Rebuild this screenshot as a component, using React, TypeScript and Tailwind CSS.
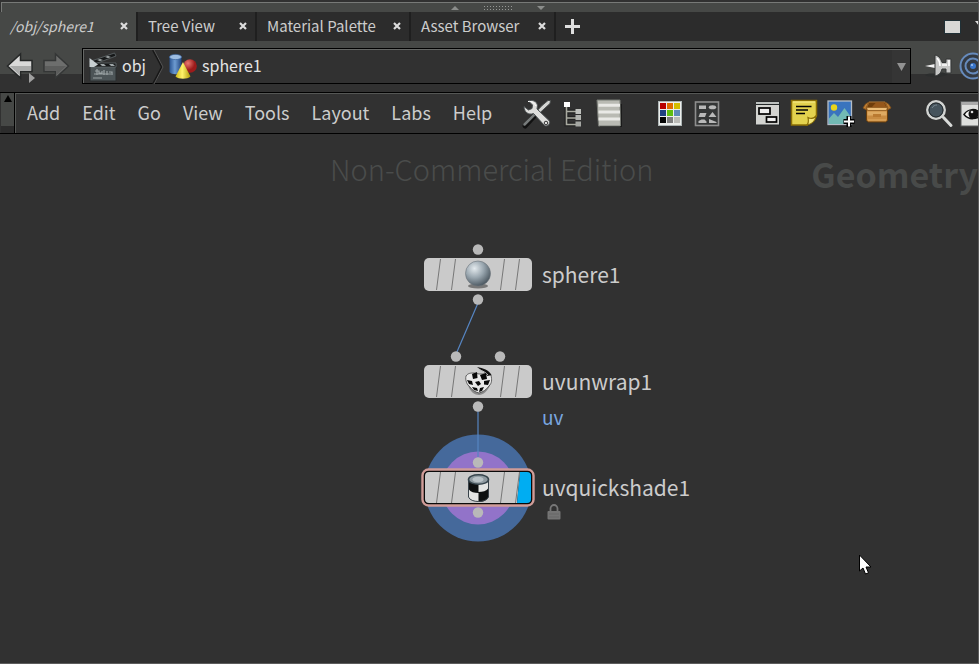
import type { ReactNode } from "react";

const tabs = [
  { name: "/obj/sphere1", width: "w-[138px]", text: "text-[14px] italic", background: "bg-[#464846]" },
  { name: "Tree View", width: "w-[119px]", text: "text-[15px]", background: "" },
  { name: "Material Palette", width: "w-[154px]", text: "text-[15px]", background: "" },
  { name: "Asset Browser", width: "w-[145px]", text: "text-[15px]", background: "" },
];

const menus = ["Add", "Edit", "Go", "View", "Tools", "Layout", "Labs", "Help"];

function Svg({ children, className = "size-7" }: { children: ReactNode; className?: string }) {
  return (
    <svg viewBox="0 0 28 28" className={`${className} shrink-0 overflow-visible`} aria-hidden="true">
      {children}
    </svg>
  );
}

function ToolsIcon() {
  return (
    <Svg>
      <path d="M2 27 14 14" stroke="#111" strokeWidth="5" strokeLinecap="round" />
      <path d="M1.500 25.500 15 12" stroke="#777b7b" strokeWidth="2.500" strokeLinecap="round" />
      <path d="M12 14 19 6.500 25 1.500 27.500 1.500 27 4.500 21 10 14.500 16Z" fill="#d4d5d3" stroke="#4a4d4d" strokeWidth="1" />
      <path d="M1 7.500 5.500 11 9 9.500 9.500 6 5.500 2C9 .5 14 2 14.500 6.500L14 10 26 21.500C28 24 25 28.500 21.500 26.500L10.500 14.500C5.500 16.500 1 13 1 7.500Z" fill="#dededc" stroke="#4b5052" strokeWidth="1" />
      <path d="M5 2.500C8.500 2 12 4 12.500 7" fill="none" stroke="#fff" strokeWidth="1" />
      <circle cx="23" cy="24" r="1.800" fill="#ddd" stroke="#333" strokeWidth="1" />
    </Svg>
  );
}

function TreeIcon() {
  return (
    <Svg>
      <path d="M7.500 8v17.500H17M7.500 12.500H17M7.500 19H17" fill="none" stroke="#222" strokeWidth="4" />
      <path d="M7.500 8v17.500H17M7.500 12.500H17M7.500 19H17" fill="none" stroke="#a9aaa0" strokeWidth="1.600" />
      <rect x="5" y="3" width="6" height="5" fill="#fff" />
      <rect x="16.500" y="10" width="5.500" height="5" fill="#bfc1bd" />
      <rect x="16.500" y="16" width="5.500" height="5" fill="#b2b4b0" />
      <rect x="16.500" y="22.500" width="5.500" height="5" fill="#a5a7a3" />
    </Svg>
  );
}

function ListIcon() {
  return (
    <Svg>
      <path d="M5 5h21.500v23H5Z" fill="#050505" />
      <path d="M2 1h23l.5 26H3.500Z" fill="#b9bab3" stroke="#777a74" strokeWidth="1" />
      <path d="M3.500 6.200h21.500M3.500 13h21.500M3.500 20h21.500" stroke="#e9e9e6" strokeWidth="3" />
    </Svg>
  );
}

const swatches = ["#b80000", "#e06c00", "#d4bd00", "#1f4080", "#5fbe10", "#5f8ab8", "#050505", "#7d7d7d", "#bcbcb8"];

function PaletteIcon() {
  return (
    <Svg>
      <rect x="2.500" y="2.500" width="23" height="24" fill="#eceeec" stroke="#aeb6b6" />
      {swatches.map((fill, i) => (
        <rect key={fill} x={4 + (i % 3) * 7} y={4 + Math.floor(i / 3) * 7} width="6" height="6" fill={fill} />
      ))}
    </Svg>
  );
}

function ShapesIcon() {
  return (
    <Svg>
      <rect x="3.500" y="3" width="23" height="23.500" fill="#343636" stroke="#8e8e8e" strokeWidth="1.600" />
      <g fill="#b9b9b9">
        <path d="M7 6.500h7v3.500H7ZM8 14h6.500l-1.500 4H6.500ZM6.500 24v-2l3-1.500h3l2 2V24ZM16.500 18l4-5 4 5ZM17 24v-4l7.500 3v1Z" />
        <ellipse cx="20.500" cy="8.300" rx="3.700" ry="2" />
      </g>
    </Svg>
  );
}

function NetworkBoxIcon() {
  return (
    <Svg>
      <rect x="3" y="2.500" width="24" height="24" fill="#222728" />
      <rect x="3" y="3" width="23" height="2" fill="#bcc0be" />
      <rect x="3" y="6" width="23" height="19.500" fill="#d3d4d1" />
      <rect x="6" y="9" width="11" height="6" fill="#eee" stroke="#000" strokeWidth="1.700" />
      <rect x="13.500" y="18" width="10" height="5" fill="#eee" stroke="#000" strokeWidth="1.700" />
    </Svg>
  );
}

function NoteIcon() {
  return (
    <Svg>
      <path d="M2.500 1.500h25v15l-9 9.500H2.500Z" fill="#e3d24e" stroke="#8a6e05" strokeWidth="1.500" />
      <path d="M4 3h22" stroke="#f5ea87" strokeWidth="1.200" />
      <path d="M18 26c2-2 1.500-5 1-7.500 3 1.500 6.500 1 8.500-2-1 5-4.500 8.500-9.500 9.500Z" fill="#f4e77c" stroke="#8a6e05" strokeWidth="1.200" />
      <path d="M7 7.500h15.500M7 11h12M7 14.500h9" stroke="#050505" strokeWidth="1.500" />
    </Svg>
  );
}

function ImageIcon() {
  return (
    <Svg>
      <rect x="3" y="2" width="23.500" height="23.500" fill="#3974be" stroke="#b4bdc7" strokeWidth="1.300" />
      <circle cx="9" cy="8.500" r="3.200" fill="#ead51b" />
      <path d="M4 19.500 9 14l4 4 6.500-9 6.500 9v7H4Z" fill="#72b9b4" />
      <path d="M24 19.500v6M21 22.500h6" stroke="#000" strokeWidth="5" strokeLinecap="square" />
      <path d="M24 17.500v10M19 22.500h10" stroke="#fff" strokeWidth="2" />
    </Svg>
  );
}

function BoxIcon() {
  return (
    <Svg>
      <path d="M5.500 9.500h21v12l-2 1.500h-17l-2-1.500Z" fill="#c98c42" stroke="#6b3e0a" strokeWidth="1" />
      <path d="M8 3h16l2.500 5.500h-21Z" fill="#6f3d0a" stroke="#b27b38" strokeWidth="1" />
      <path d="m11 8 4-4.500h8l2.500 5Z" fill="#96571a" />
      <path d="m5 9 3-6-3.500 2L2 9l3.500 2ZM27 9l-3-6 3.500 2L30 9l-3.500 2Z" fill="#c07e33" stroke="#80501a" strokeWidth=".8" />
      <path d="M5.500 8.500h21l-1 3h-19Z" fill="#ecbd78" stroke="#8b571c" strokeWidth=".8" />
      <path d="M6.500 12.500h19v4h-19Z" fill="#deaa62" />
      <path d="M12 15h8v3h-8Z" fill="#ba7a31" />
      <path d="M7 21h18" stroke="#e0aa60" strokeWidth="1.200" />
    </Svg>
  );
}

function MagnifierIcon() {
  return (
    <Svg>
      <path d="m19.500 18.500 7.500 8" stroke="#d8dad8" strokeWidth="3" strokeLinecap="round" />
      <circle cx="12" cy="11" r="8.700" fill="#36424a" stroke="#d2d4d2" strokeWidth="2.500" />
      <circle cx="12" cy="11" r="7" fill="#46545d" stroke="#252b2e" strokeWidth="1" />
      <path d="M8 9c1-2 3-3 5-3" fill="none" stroke="#788790" strokeWidth="1" />
    </Svg>
  );
}

function EyeIcon() {
  return (
    <Svg>
      <rect x="1" y="2.500" width="26" height="24.500" fill="#dedfdd" stroke="#5a5d5d" />
      <rect x="2" y="3" width="24" height="3" fill="#aaa" />
      <path d="M4 15.500c4-6 12-7 18 0-5 5-13 6-18 0Z" fill="#f4f4f2" stroke="#111" strokeWidth="1.500" />
      <circle cx="13.500" cy="15" r="5" fill="#111" />
      <circle cx="12" cy="13" r="1.300" fill="#ddd" />
    </Svg>
  );
}

const toolGroups = [
  { space: "ml-4", items: [["Operator tools", <ToolsIcon />], ["Tree", <TreeIcon />], ["List", <ListIcon />]] },
  { space: "ml-[25px]", items: [["Color palette", <PaletteIcon />], ["Shape palette", <ShapesIcon />]] },
  { space: "ml-[25px]", items: [["Network box", <NetworkBoxIcon />], ["Sticky note", <NoteIcon />], ["Background image", <ImageIcon />], ["Subnet", <BoxIcon />]] },
  { space: "ml-[27px]", items: [["Find", <MagnifierIcon />], ["Display options", <EyeIcon />]] },
] as { space: string; items: [string, ReactNode][] }[];

function ArrowIcon({ forward = false }: { forward?: boolean }) {
  return (
    <svg viewBox="0 0 28 28" className={`size-7 shrink-0 ${forward ? "-scale-x-100" : ""}`} aria-hidden="true">
      <path d="M1.500 14 14.500 2v6.500H26v11H14.500V26Z" fill={forward ? "#6d6e6d" : "#d9d9d8"} stroke={forward ? "#343636" : "#252727"} strokeWidth="1.500" />
      <path d="M4 14h21v4.500H13.500v4.500Z" fill={forward ? "#5c5d5c" : "#aaabaa"} />
    </svg>
  );
}

function ClapperIcon() {
  return (
    <Svg className="size-7">
      <path d="M1 13h26v15H1Z" fill="#4c5457" stroke="#2b2f30" />
      <path d="M1 8.500 25.500 0l1.500 3L3 12Z" fill="#161819" stroke="#697174" strokeWidth=".7" />
      <path d="m8 7 3-1 3 1-3 1ZM16 4l3-1 3 1-3 1Z" fill="#aab0b1" />
      <path d="M2 10h25v4H2Z" fill="#17191a" stroke="#697174" strokeWidth=".7" />
      <path d="M11 11h4l2 2h-4ZM20 11h4l2 2h-4Z" fill="#9fa6a8" />
      <path d="M.5 5 9 11.500 5 14H.5Z" fill="#c7cfd2" />
      <path d="M6 18h4v2h3v-2M8 16v6M15 17v5M18 18v4M20 19h3v3M5 21h17M4 25h9" fill="none" stroke="#9aa2a4" strokeWidth="1.200" />
    </Svg>
  );
}

function GeometryIcon() {
  return (
    <Svg className="size-7">
      <defs>
        <linearGradient id="cylinder">
          <stop stopColor="#2a5593" />
          <stop offset=".45" stopColor="#6d9bd1" />
          <stop offset="1" stopColor="#21457e" />
        </linearGradient>
        <linearGradient id="cone">
          <stop stopColor="#d0b915" />
          <stop offset=".45" stopColor="#fff26b" />
          <stop offset="1" stopColor="#b09a08" />
        </linearGradient>
        <radialGradient id="ball" cx=".35" cy=".3">
          <stop stopColor="#e87870" />
          <stop offset="1" stopColor="#9d1b1b" />
        </radialGradient>
      </defs>
      <path d="M.5 4v15c2 3 10 3 12 0V4Z" fill="url(#cylinder)" />
      <ellipse cx="6.500" cy="4" rx="6" ry="2.600" fill="#9dbde2" stroke="#3c659d" strokeWidth=".7" />
      <circle cx="21" cy="13" r="6.800" fill="url(#ball)" />
      <path d="M14 9 6.500 23.500c3 3 12 3 15 0Z" fill="url(#cone)" />
    </Svg>
  );
}

function PinIcon() {
  return (
    <Svg>
      <path d="M0 23c6-3 10 0 12-2 4-1 8 0 11 1-5 4-18 4-23 1Z" fill="#2c2e2e" />
      <path d="m0 14 10-2v4Z" fill="#f2f2f2" />
      <path d="M10 3c5 1 6 5 7 7.500h4V7h5v14h-5v-4h-4c-1 3-2 6-7 7Z" fill="#c6c7c6" stroke="#343636" strokeWidth="1" />
      <path d="M12 6c2 2 3 5 3 8M24 8v6M17 13h5" fill="none" stroke="#fff" strokeWidth="1.500" />
    </Svg>
  );
}

function TargetIcon() {
  return (
    <Svg>
      <circle cx="14" cy="14" r="12.500" fill="#343a42" stroke="#668bbd" strokeWidth="2" />
      <circle cx="14" cy="14" r="7.500" fill="none" stroke="#668bbd" strokeWidth="2" />
      <circle cx="14" cy="14" r="3" fill="#3975c9" />
      <circle cx="13" cy="13" r="1" fill="#a9c8f2" />
    </Svg>
  );
}

function SphereGlyph() {
  return (
    <g>
      <defs>
        <radialGradient id="sphere" cx=".36" cy=".3" r=".75">
          <stop stopColor="#e4eaee" />
          <stop offset=".5" stopColor="#98a5ae" />
          <stop offset="1" stopColor="#46525b" />
        </radialGradient>
      </defs>
      <ellipse cx="60" cy="50" rx="10" ry="2.500" fill="#777" />
      <circle cx="60" cy="37.500" r="12.500" fill="url(#sphere)" stroke="#6b747b" strokeWidth=".6" />
    </g>
  );
}

function UnwrapGlyph() {
  return (
    <g>
      <path d="M50 42c2 7 7 10 11 10s9-4 11-10Z" fill="#8a8a8a" />
      <path d="M48 33c2-3 5-3 8-3l5 1h7l5 1c1 5 1 8-2 11-3 4-6 6-10 7-4-1-7-3-9-6-3-2-5-7-4-11Z" fill="#e8e8e8" stroke="#444" strokeWidth=".8" />
      <path d="M59 24c6 1 12 3 14.500 8l-4 1c-2-4-6-5-10.500-9Z" fill="#111" />
      <path d="M61 26.500c4 1.500 7 3 9 5.500" fill="none" stroke="#bbb" strokeWidth="1" />
      <path d="m54 31 5-2 .5 6-4.500 1ZM62 32l6-2 1 6-5 1ZM49 37l5 1 1 4-4-1ZM57 39l4-1 2 3-3 2ZM66 38l6-1-2 5-4-.5ZM54 44l5 1 1 3-4-1ZM62 45l4-1-2 4-3 1Z" fill="#080808" />
    </g>
  );
}

function ShadeGlyph() {
  return (
    <g>
      <path d="M50.500 30v18c2 6 18 6 20 0V30Z" fill="#e3e5e4" />
      <path d="M50.500 31v9c2 3 6 4 10 4v-9ZM60.500 43c4 0 8-1 10-4v9c-2 4-6 5-10 5Z" fill="#0d1011" />
      <path d="M50.500 30v18c2 6 18 6 20 0V30Z" fill="none" stroke="#39434a" strokeWidth="1" />
      <ellipse cx="60.500" cy="30.500" rx="10" ry="4.800" fill="#8e9aa1" stroke="#35444c" strokeWidth="1.600" />
      <ellipse cx="60" cy="30.500" rx="5.500" ry="2.700" fill="#b8c2c7" />
    </g>
  );
}

/* Body of a network node: a 108x33 tile with its connectors above and below. */
function NodeBody({ inputs, selected = false, glyph }: { inputs: number[]; selected?: boolean; glyph: ReactNode }) {
  return (
    <svg viewBox="0 0 120 74" className="h-[74px] w-[120px] shrink-0 overflow-visible" aria-hidden="true">
      {selected && (
        <>
          <rect x="4.500" y="18.500" width="111" height="36" rx="6" fill="#0a0a0a" stroke="#d09c98" strokeWidth="2.400" />
          <path d="M11 21h91l-3 31H11q-4 0-4-4V25q0-4 4-4Z" fill="#cacaca" />
          <path d="M102 21h7q4 0 4 4v23q0 4-4 4H99Z" fill="#00adf2" />
        </>
      )}
      {!selected && <rect x="6" y="20" width="108" height="33" rx="5" fill="#cacaca" />}
      <path d="m22.500 21-4 31M37.500 21l-4 31M86.500 21l-4 31M101.500 21l-4 31" stroke="#777" strokeWidth="1" />
      {inputs.map((x) => (
        <circle key={x} cx={x} cy="11.500" r="5.200" fill="#b9b9b9" />
      ))}
      <circle cx="60" cy="61.500" r="5.200" fill="#b9b9b9" />
      <g transform="translate(0 -2)">{glyph}</g>
    </svg>
  );
}

function NetworkNode({ place, name, children, body }: { place: string; name: string; children?: ReactNode; body: ReactNode }) {
  return (
    <div className={`absolute flex gap-1 ${place}`}>
      {body}
      <div className="pt-5">
        <div className="text-[21px] leading-8">{name}</div>
        {children}
      </div>
    </div>
  );
}

export default function App() {
  return (
    <div className="flex h-screen flex-col overflow-hidden border-r border-b border-[#5c5c5c] bg-[#313131] font-['Noto_Sans_CJK_SC','Noto_Sans',sans-serif] text-[#cccccc]">
      <div className="ml-px mt-0.5 flex h-2.5 shrink-0 items-center justify-center gap-6 border-t border-l border-[#777977] bg-[#464846] pl-4">
        <svg viewBox="0 0 8 4" className="h-1 w-2" aria-hidden="true"><path d="m0 4 4-4 4 4Z" fill="#8b8d8b" /></svg>
        <div className="h-[5px] w-[30px] bg-[radial-gradient(#969896_1px,transparent_1px)] bg-size-[3px_3px]" />
        <svg viewBox="0 0 8 4" className="h-1 w-2" aria-hidden="true"><path d="m0 0 4 4 4-4Z" fill="#8b8d8b" /></svg>
      </div>

      <div className="flex h-[29px] shrink-0 bg-[#2c2c2c]">
        {tabs.map((tab) => (
          <div key={tab.name} className={`flex shrink-0 items-center justify-between border-r-2 border-[#1f1f1f] pr-2 pb-px pl-2.5 ${tab.width} ${tab.background}`}>
            <button className={`whitespace-nowrap leading-7 ${tab.text}`}>{tab.name}</button>
            <button aria-label={`Close ${tab.name}`}>
              <svg viewBox="0 0 8 8" className="size-2" aria-hidden="true"><path d="m1 1 6 6M7 1 1 7" stroke="#dcdcdc" strokeWidth="2.200" /></svg>
            </button>
          </div>
        ))}
        <button aria-label="New tab" className="ml-[9px]">
          <svg viewBox="0 0 15 15" className="size-[15px]" aria-hidden="true"><path d="M7.500 0v15M0 7.500h15" stroke="#dedede" strokeWidth="3" /></svg>
        </button>
        <button aria-label="Maximize pane" className="ml-auto">
          <svg viewBox="0 0 17 14" className="h-3.5 w-[17px]" aria-hidden="true"><rect x=".5" y=".5" width="16" height="13" fill="#d8d8d6" stroke="#203036" /></svg>
        </button>
        <button aria-label="Pane menu" className="ml-3.5 w-[3px] overflow-hidden">
          <svg viewBox="0 0 8 5" className="mb-1.5 h-[5px] w-2 max-w-none" aria-hidden="true"><path d="m0 0 4 5 4-5Z" fill="#dcdcdc" /></svg>
        </button>
      </div>

      <div className="flex h-[51px] shrink-0 items-start bg-[linear-gradient(#464846_33px,#313131_33px)] pt-[7px]">
        <div className="flex w-[82px] shrink-0 pt-1 pl-1.5">
          <button aria-label="Back" className="relative">
            <ArrowIcon />
            <svg viewBox="0 0 6 10" className="absolute top-[21px] left-[23px] h-2.5 w-1.5" aria-hidden="true"><path d="m0 0 6 5-6 5Z" fill="#a0a0a0" /></svg>
          </button>
          <button aria-label="Forward" className="ml-2"><ArrowIcon forward /></button>
        </div>
        <nav aria-label="Network path" className="h-9 min-w-0 grow border border-black">
          <div className="flex h-full items-center border-t border-l border-[#666866] bg-[#313131] pl-[5px] text-[16px] leading-7 text-[#e4e4e4]">
            <button className="flex items-center gap-[5px]"><ClapperIcon /><span className="pb-1">obj</span></button>
            <svg viewBox="0 0 12 34" className="ml-1.5 h-[34px] w-3" aria-hidden="true">
              <path d="m1 0 9 17-9 17" fill="none" stroke="#171717" strokeWidth="2" />
              <path d="m2 0 9 17-9 17" fill="none" stroke="#555" strokeWidth="1" />
            </svg>
            <button className="ml-[5px] flex items-center gap-[5px]"><GeometryIcon /><span className="pb-1">sphere1</span></button>
            <button aria-label="Path history" className="ml-auto flex h-full w-[18px] items-center justify-center bg-[#353535]">
              <svg viewBox="0 0 9 8" className="h-2 w-[9px]" aria-hidden="true"><path d="M0 0h9L4.500 8Z" fill="#929292" /></svg>
            </button>
          </div>
        </nav>
        <div className="flex w-[67px] shrink-0 gap-1.5 overflow-hidden pt-1 pl-3.5">
          <button aria-label="Pin" className="shrink-0"><PinIcon /></button>
          <button aria-label="Link" className="shrink-0"><TargetIcon /></button>
        </div>
      </div>

      <div className="flex h-[42px] shrink-0 overflow-hidden border-y border-black">
        <button aria-label="Collapse toolbar" className="ml-px flex w-3.5 shrink-0 justify-center border-r border-black bg-[linear-gradient(#464846_33px,#2c2c2c_33px)] pt-0.5">
          <svg viewBox="0 0 8 7" className="h-[7px] w-2" aria-hidden="true"><path d="m0 7 4-7 4 7Z" fill="#000" /></svg>
        </button>
        <div className="flex min-w-0 grow items-center border-t border-l border-[#555755] pb-px">
          <div className="flex shrink-0 pb-0.5">
            {menus.map((menu) => (
              <button key={menu} className="px-[11px] text-[18px] leading-8">{menu}</button>
            ))}
          </div>
          {toolGroups.map((group, i) => (
            <div key={i} className={`flex shrink-0 ${group.space}`}>
              {group.items.map(([label, icon]) => (
                <button key={label} aria-label={label} className="flex w-9 justify-center">{icon}</button>
              ))}
            </div>
          ))}
        </div>
      </div>

      <main className="relative grow overflow-hidden">
        <div className="absolute top-3.5 left-[330px] text-[29px] leading-10 font-light whitespace-nowrap text-[#4a4c4b]">Non-Commercial Edition</div>
        <div className="absolute top-5 right-0 text-[34px] leading-10 font-bold text-[#484a49]">Geometry</div>

        <svg viewBox="0 0 108 108" className="absolute top-[300px] left-[424px] size-[108px]" aria-hidden="true">
          <circle cx="54" cy="54" r="53.500" fill="#45699b" />
          <circle cx="54" cy="54" r="36.500" fill="#9273c9" />
        </svg>
        <svg viewBox="0 0 60 170" className="absolute top-[165px] left-[448px] h-[170px] w-[60px]" aria-hidden="true">
          <path d="M30 4 8.500 54M30 110v48" stroke="#5685c2" strokeWidth="1.200" />
        </svg>

        <NetworkNode place="top-[104px] left-[418px]" name="sphere1" body={<NodeBody inputs={[60]} glyph={<SphereGlyph />} />} />
        <NetworkNode place="top-[211px] left-[418px]" name="uvunwrap1" body={<NodeBody inputs={[38, 82]} glyph={<UnwrapGlyph />} />}>
          <div className="pt-1 text-[19px] leading-8 text-[#7aa7e0]">uv</div>
        </NetworkNode>
        <NetworkNode place="top-[317px] left-[418px]" name="uvquickshade1" body={<NodeBody inputs={[60]} selected glyph={<ShadeGlyph />} />}>
          <svg viewBox="0 0 14 16" className="mt-px ml-[5px] h-4 w-3.5" aria-label="Locked">
            <path d="M3.500 8V4.500a3.500 3.500 0 0 1 7 0V8" fill="none" stroke="#777" strokeWidth="1.800" />
            <rect x=".5" y="7" width="13" height="8.500" rx="1" fill="#747474" />
            <path d="M2 10h10M2 13h10" stroke="#666" strokeWidth="1" />
          </svg>
        </NetworkNode>

        <svg viewBox="0 0 13 21" className="absolute top-[420px] left-[859px] h-[21px] w-[13px]" aria-hidden="true">
          <path d="M.5 1v16l3.500-3 2.500 6 3-1.200L7 13h5Z" fill="#fff" stroke="#000" strokeWidth="1" />
        </svg>
      </main>
    </div>
  );
}
